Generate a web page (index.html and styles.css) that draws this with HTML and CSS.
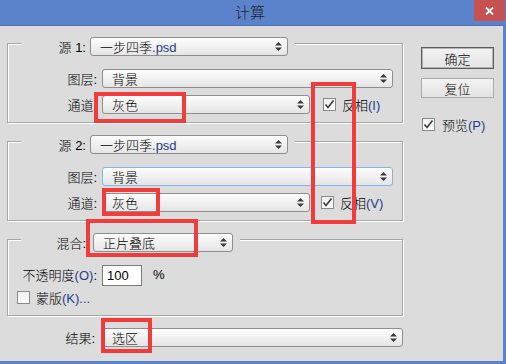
FILE: index.html
```html
<!DOCTYPE html>
<html lang="zh-CN">
<head>
  <meta charset="UTF-8" />
  <title>计算</title>
  <link rel="stylesheet" href="styles.css">
</head>
<body>
  <div class="window">
    <div class="titlebar">
      <span></span>
      <div class="title">计算</div>
      <div class="close">
        <svg width="9" height="8" viewBox="0 0 9 8"><path d="M1 0.5 L8 7.5 M8 0.5 L1 7.5" stroke="#fff" stroke-width="1.8" fill="none"/></svg>
      </div>
    </div>

    <div class="main">
      <div class="left">
        <!-- 源 1 -->
        <div class="group">
          <div class="head">
            <span class="head-label">源 1:</span>
            <div class="select w-src"><span>一步四季<span class="hk">.psd</span></span><svg class="arrows" width="7" height="9" viewBox="0 0 7 9"><path d="M0 3.5 L3.5 0 L7 3.5 Z M0 5.5 L7 5.5 L3.5 9 Z" fill="#3a3a3a"/></svg></div>
          </div>
          <div class="row row-first">
            <span class="row-label">图层:</span>
            <div class="select w-layer"><span>背景</span><svg class="arrows" width="7" height="9" viewBox="0 0 7 9"><path d="M0 3.5 L3.5 0 L7 3.5 Z M0 5.5 L7 5.5 L3.5 9 Z" fill="#3a3a3a"/></svg></div>
          </div>
          <div class="row">
            <span class="row-label">通道:</span>
            <div class="select w-chan"><span>灰色</span><svg class="arrows" width="7" height="9" viewBox="0 0 7 9"><path d="M0 3.5 L3.5 0 L7 3.5 Z M0 5.5 L7 5.5 L3.5 9 Z" fill="#3a3a3a"/></svg></div>
            <span class="check check-inv"><svg width="11" height="11" viewBox="0 0 11 11"><path d="M1.5 5.5 L4 8.5 L9.5 1.5" stroke="#3c3c3c" stroke-width="1.6" fill="none"/></svg></span>
            <span class="check-text">反相<span class="hk">(I)</span></span>
          </div>
        </div>

        <!-- 源 2 -->
        <div class="group">
          <div class="head">
            <span class="head-label">源 2:</span>
            <div class="select w-src"><span>一步四季<span class="hk">.psd</span></span><svg class="arrows" width="7" height="9" viewBox="0 0 7 9"><path d="M0 3.5 L3.5 0 L7 3.5 Z M0 5.5 L7 5.5 L3.5 9 Z" fill="#3a3a3a"/></svg></div>
          </div>
          <div class="row row-first">
            <span class="row-label">图层:</span>
            <div class="select w-layer focus"><span>背景</span><svg class="arrows" width="7" height="9" viewBox="0 0 7 9"><path d="M0 3.5 L3.5 0 L7 3.5 Z M0 5.5 L7 5.5 L3.5 9 Z" fill="#3a3a3a"/></svg></div>
          </div>
          <div class="row">
            <span class="row-label">通道:</span>
            <div class="select w-chan"><span>灰色</span><svg class="arrows" width="7" height="9" viewBox="0 0 7 9"><path d="M0 3.5 L3.5 0 L7 3.5 Z M0 5.5 L7 5.5 L3.5 9 Z" fill="#3a3a3a"/></svg></div>
            <span class="check check-inv2"><svg width="11" height="11" viewBox="0 0 11 11"><path d="M1.5 5.5 L4 8.5 L9.5 1.5" stroke="#3c3c3c" stroke-width="1.6" fill="none"/></svg></span>
            <span class="check-text">反相<span class="hk">(V)</span></span>
          </div>
        </div>

        <!-- 混合 -->
        <div class="group group-blend">
          <div class="head head-blend">
            <span class="head-label">混合:</span>
            <div class="select w-blend"><span>正片叠底</span><svg class="arrows" width="7" height="9" viewBox="0 0 7 9"><path d="M0 3.5 L3.5 0 L7 3.5 Z M0 5.5 L7 5.5 L3.5 9 Z" fill="#3a3a3a"/></svg></div>
          </div>
          <div class="row row-first">
            <span class="row-label">不透明度<span class="hk">(O)</span>:</span>
            <div class="input">100</div>
            <span class="percent">%</span>
          </div>
          <div class="row row-mask">
            <span class="check"></span>
            <span class="check-text">蒙版<span class="hk">(K)...</span></span>
          </div>
        </div>

        <div class="result">
          <span class="result-label">结果:</span>
          <div class="select w-result"><span>选区</span><svg class="arrows" width="7" height="9" viewBox="0 0 7 9"><path d="M0 3.5 L3.5 0 L7 3.5 Z M0 5.5 L7 5.5 L3.5 9 Z" fill="#3a3a3a"/></svg></div>
        </div>
      </div>

      <div class="right">
        <div class="btn btn-default">确定</div>
        <div class="btn">复位</div>
        <div class="preview">
          <span class="check"><svg width="11" height="11" viewBox="0 0 11 11"><path d="M1.5 5.5 L4 8.5 L9.5 1.5" stroke="#3c3c3c" stroke-width="1.6" fill="none"/></svg></span>
          <span class="check-text">预览<span class="hk">(P)</span></span>
        </div>
      </div>
    </div>

    <!-- 红色标注框 -->
    <div class="mark mark-chan1"></div>
    <div class="mark mark-invert"></div>
    <div class="mark mark-chan2"></div>
    <div class="mark mark-blend"></div>
    <div class="mark mark-result"></div>
  </div>
</body>
</html>
```

FILE: styles.css
```css
body {
  margin: 0;
  font-family: "Liberation Sans", "Noto Sans CJK SC", sans-serif;
  font-size: 13px;
  font-weight: 300;
  color: #000;
}
.window {
  position: relative;
  width: 506px;
  height: 364px;
  box-sizing: border-box;
  background: #dcdcdc;
  border-bottom: 3px solid #5b83cb;
}
.titlebar {
  display: grid;
  grid-template-columns: 1fr auto 1fr;
  height: 25px;
  background: #5b83cb;
  border-bottom: 1px solid #4d74ba;
}
.title {
  font-size: 15px;
  line-height: 25px;
  color: #1e1e1e;
  margin-right: 6px;
}
.close {
  justify-self: end;
  width: 31px;
  height: 21px;
  margin-right: 1px;
  background: #c75050;
  display: flex;
  align-items: center;
  justify-content: center;
}
.main {
  display: flex;
  height: 335px;
  box-sizing: border-box;
  padding-left: 7px;
  border-right: 3px solid #5b83cb;
}
.left {
  width: 396px;
  padding-top: 17px;
}
.right {
  width: 73px;
  margin-left: 18px;
  padding-top: 21px;
}
.hk {
  color: #1d3f85;
}

/* grupos */
.group {
  border: 1px solid #a6a6a6;
  box-shadow: 1px 1px 0 #fff, inset 1px 1px 0 #fff;
  padding-bottom: 8px;
}
.group + .group {
  margin-top: 18px;
}
.group-blend {
  padding-bottom: 11px;
}
.head {
  display: flex;
  align-items: center;
  gap: 4px;
  width: fit-content;
  margin: -13px 0 0 13px;
  padding: 6px 7px 0 0;
  background: #dcdcdc;
}
.head-blend {
  gap: 7px;
}
.head-label {
  width: 65px;
  text-align: right;
}
.row {
  display: flex;
  align-items: center;
  height: 19px;
  margin-top: 7px;
}
.row-first {
  margin-top: 13px;
}
.row-label {
  width: 89px;
  margin-right: 5px;
  text-align: right;
  white-space: nowrap;
}
.row-mask {
  height: 13px;
  padding-left: 9px;
}

/* controles */
.select {
  box-sizing: border-box;
  height: 19px;
  display: flex;
  align-items: center;
  justify-content: space-between;
  padding: 0 5px 0 9px;
  border: 1px solid #8e8e8e;
  border-radius: 3px;
  background: linear-gradient(#fdfdfd, #e5e5e5);
}
.select.focus {
  border-color: #86b3e2;
}
.w-src { width: 198px; }
.w-layer { width: 291px; }
.w-chan { width: 208px; }
.w-blend { width: 140px; }
.w-result { width: 301px; }

.check {
  box-sizing: border-box;
  width: 13px;
  height: 13px;
  display: flex;
  align-items: center;
  justify-content: center;
  border: 1px solid #8a8a8a;
  background: linear-gradient(#f0f0f0, #fdfdfd);
}
.check-inv {
  margin-left: 13px;
}
.check-inv2 {
  margin-left: 11px;
}
.check-text {
  margin-left: 6px;
}
.input {
  box-sizing: border-box;
  width: 40px;
  height: 21px;
  line-height: 19px;
  padding-left: 4px;
  background: #fff;
  border: 1px solid #7c7c7c;
}
.row-first .input {
  margin-top: 2px;
}
.percent {
  margin-left: 11px;
}
.result {
  display: flex;
  align-items: center;
  margin-top: 12px;
}
.result-label {
  width: 88px;
  margin-right: 7px;
  text-align: right;
}

/* botones */
.btn {
  box-sizing: border-box;
  height: 20px;
  display: flex;
  align-items: center;
  justify-content: center;
  border: 1px solid #ababab;
  background: linear-gradient(#f3f3f3, #e3e3e3);
}
.btn-default {
  height: 22px;
  border-color: #5c5c5c;
  box-shadow: inset 0 0 0 1px #b4b4b4;
}
.btn + .btn {
  margin-top: 9px;
}
.preview {
  display: flex;
  align-items: center;
  margin-top: 17px;
  padding-left: 1px;
}
.preview .check-text {
  margin-left: 7px;
}

/* marcas rojas */
.mark {
  position: absolute;
  box-sizing: border-box;
  border: 4px solid #f23b3b;
}
.mark-chan1 { left: 94px; top: 92px; width: 92px; height: 31px; }
.mark-invert { left: 311px; top: 82px; width: 45px; height: 142px; }
.mark-chan2 { left: 102px; top: 188px; width: 58px; height: 28px; }
.mark-blend { left: 86px; top: 219px; width: 112px; height: 38px; }
.mark-result { left: 101px; top: 318px; width: 51px; height: 35px; }
```
